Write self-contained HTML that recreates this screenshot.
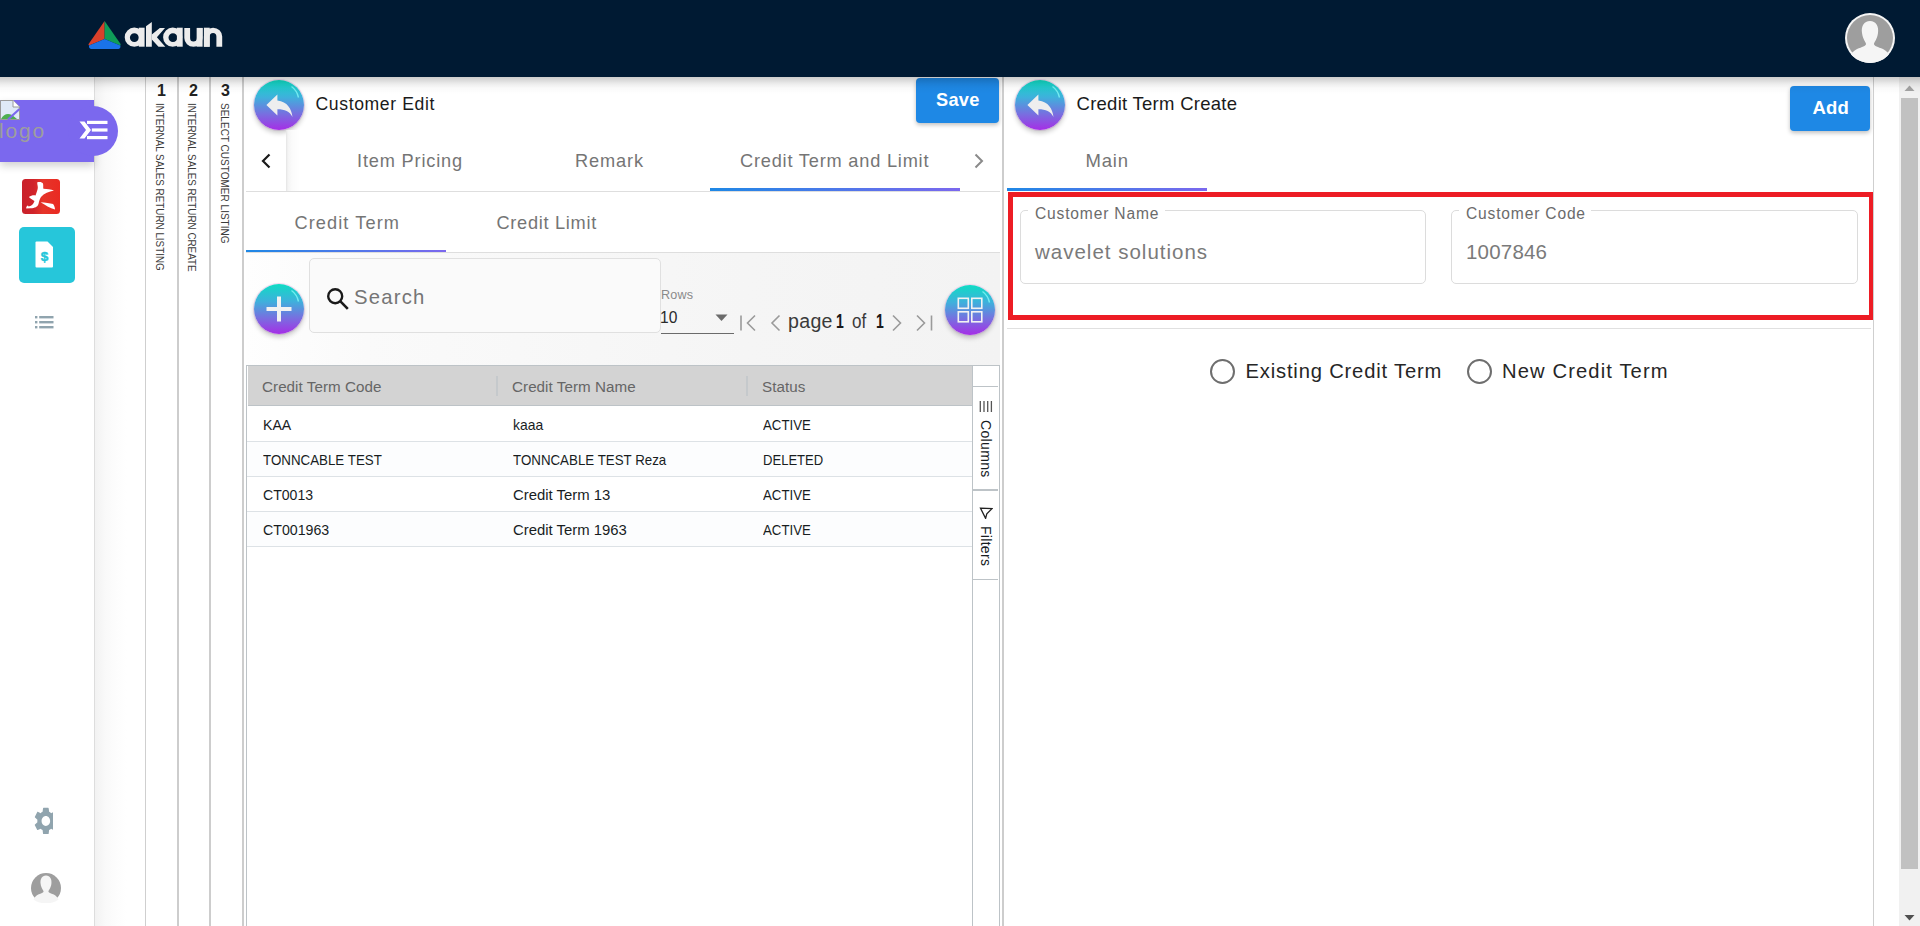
<!DOCTYPE html>
<html><head><meta charset="utf-8">
<style>
*{box-sizing:border-box;margin:0;padding:0}
html,body{width:1920px;height:926px;overflow:hidden;background:#fff;font-family:"Liberation Sans",sans-serif;color:#212121}
.a{position:absolute}
.t{position:absolute;white-space:nowrap;line-height:1}
</style></head><body>

<!-- ===== header ===== -->
<div class="a" style="left:0;top:0;width:1920px;height:77px;background:#001a33"></div>
<svg class="a" style="left:80px;top:10px" width="160" height="50" viewBox="80 10 160 50">
  <path d="M104.6 21 L104.6 39 L89 45.6 Q88 45 88.8 43.8 Z" fill="#d9412b"/>
  <path d="M104.6 21 L104.6 39 L120.3 45.6 Q121 45 120.4 43.8 Z" fill="#0f9d58"/>
  <path d="M104.6 39 L89 45.6 Q88.5 48.5 91 48.9 L118.5 48.9 Q121 48.5 120.3 45.6 Z" fill="#1a73e8"/>
  <g fill="#ececec">
   <path fill-rule="evenodd" d="M124.7 37.2 A9.6 9.6 0 1 0 143.9 37.2 A9.6 9.6 0 1 0 124.7 37.2 Z M129.9 37.6 A4.45 4.3 0 1 0 138.8 37.6 A4.45 4.3 0 1 0 129.9 37.6 Z"/>
   <rect x="138.8" y="27.7" width="5.8" height="19"/>
   <path d="M146 26.3 L151.8 21.9 V46.7 H146 Z"/>
   <path d="M151.8 34.6 L159.8 27.9 H165 L156.9 37.3 L165.3 46.7 H158.5 L151.8 39.6 Z"/>
   <path fill-rule="evenodd" d="M163.1 37.2 A9.6 9.6 0 1 0 182.3 37.2 A9.6 9.6 0 1 0 163.1 37.2 Z M168.5 37.6 A4.45 4.3 0 1 0 177.4 37.6 A4.45 4.3 0 1 0 168.5 37.6 Z"/>
   <rect x="176.9" y="27.7" width="5.8" height="19"/>
   <path d="M184.3 27.9 H190.1 V38 A3.35 3.6 0 0 0 196.8 38 V27.9 H202.6 V38 A9.15 8.7 0 0 1 184.3 38 Z"/>
   <rect x="196.8" y="27.9" width="5.8" height="18.8"/>
   <path d="M203.9 46.7 H209.7 V36.6 A3.35 3.6 0 0 1 216.4 36.6 V46.7 H222.2 V36.6 A9.15 8.9 0 0 0 203.9 36.6 Z"/>
   <rect x="203.9" y="27.7" width="5.8" height="19"/>
  </g>
</svg>
<div class="a" style="left:1845px;top:13px;width:50px;height:50px;border-radius:50%;background:#f5f5f5;overflow:hidden">
  <svg width="50" height="50" viewBox="0 0 50 50"><circle cx="25" cy="25" r="23" fill="#9e9e9e"/>
  <path d="M25 8 C31 8 34 13 33 20 C32 27 29 29 29 31 C29 33 33 34 38 36 C42 38 44 41 45 43 C40 48 33 50 25 50 C17 50 10 48 5 43 C6 41 8 38 12 36 C17 34 21 33 21 31 C21 29 18 27 17 20 C16 13 19 8 25 8 Z" fill="#f5f5f5"/></svg>
</div>

<!-- ===== sidebar ===== -->
<div class="a" id="sidebar" style="left:0;top:77px;width:95px;height:849px;background:#fff;border-right:1px solid #ddd"></div>
<!-- ===== vertical tabs column ===== -->
<div class="a" style="left:95px;top:77px;width:50px;height:849px;background:linear-gradient(90deg,#f2f2f2 0,#f9f9f9 10px,#fdfdfd 22px,#fff 32px)"></div>
<div class="a" style="left:145px;top:77px;width:1px;height:849px;background:#cfcfcf"></div>
<div class="a" style="left:177px;top:77px;width:2px;height:849px;background:#cdcdcd"></div>
<div class="a" style="left:209px;top:77px;width:2px;height:849px;background:#cdcdcd"></div>
<div class="a" style="left:242px;top:77px;width:2px;height:849px;background:#cdcdcd"></div>
<div class="t" style="left:157px;top:83px;font-size:16px;font-weight:700;color:#222">1</div>
<div class="t" style="left:189px;top:83px;font-size:16px;font-weight:700;color:#222">2</div>
<div class="t" style="left:221px;top:83px;font-size:16px;font-weight:700;color:#222">3</div>
<div class="t" style="left:165px;top:103px;font-size:11.4px;color:#3c3c3c;transform-origin:0 0;transform:rotate(90deg) scaleX(0.865)">INTERNAL SALES RETURN LISTING</div>
<div class="t" style="left:197px;top:103px;font-size:11.4px;color:#3c3c3c;transform-origin:0 0;transform:rotate(90deg) scaleX(0.865)">INTERNAL SALES RETURN CREATE</div>
<div class="t" style="left:230px;top:103px;font-size:11.4px;color:#3c3c3c;transform-origin:0 0;transform:rotate(90deg) scaleX(0.88)">SELECT CUSTOMER LISTING</div>

<!-- ===== left panel ===== -->
<div id="left">
<!-- back button -->
<div class="a" style="left:254px;top:80px;width:50px;height:50px;border-radius:50%;background:linear-gradient(180deg,#0fdcc4 0%,#3fb0dc 35%,#7b6be0 70%,#a52ee6 100%);box-shadow:0 3px 5px rgba(0,0,0,.22),0 0 0 1px rgba(230,200,240,.6)">
 <svg class="a" style="left:0;top:0" width="50" height="50" viewBox="0 0 50 50">
  <path d="M37.5 6.5 Q43 10.5 44.5 17.5" fill="none" stroke="#7ff4f4" stroke-width="1.4" opacity=".85"/>
  <path d="M23.4 14.6 L12.4 25 L23.4 35.4 V29.2 C31 29.2 35.5 31 38.5 37 C37.5 29 33.5 21.5 23.4 20.5 Z" fill="#eeeeee"/>
 </svg>
</div>
<div class="t" id="custedit" style="left:315.5px;top:95.5px;font-size:17.6px;color:#1a1a1a;letter-spacing:0.62px">Customer Edit</div>
<!-- save -->
<div class="a" style="left:916px;top:78px;width:83px;height:45px;border-radius:4px;background:#1e88e5;box-shadow:0 2px 4px rgba(0,0,0,.25)"></div>
<div class="t" style="left:936px;top:91px;font-size:18.2px;font-weight:700;color:#fff;letter-spacing:0.3px">Save</div>

<!-- tab header -->
<svg class="a" style="left:260px;top:153px" width="12" height="16" viewBox="0 0 12 16"><path d="M9.5 1.5 L3 8 L9.5 14.5" fill="none" stroke="#1a1a1a" stroke-width="2.2"/></svg>
<div class="a" style="left:286px;top:130px;width:14px;height:61px;background:linear-gradient(90deg,#e4e4e4 0,#f4f4f4 2px,#fbfbfb 6px,#fff 14px)"></div>
<div class="t" style="left:357px;top:152px;font-size:18.2px;color:#757575;letter-spacing:0.83px">Item Pricing</div>
<div class="t" style="left:575px;top:152px;font-size:18.2px;color:#757575;letter-spacing:0.88px">Remark</div>
<div class="t" style="left:740px;top:152px;font-size:18.2px;color:#757575;letter-spacing:0.8px">Credit Term and Limit</div>
<svg class="a" style="left:973px;top:153px" width="12" height="16" viewBox="0 0 12 16"><path d="M2.5 1.5 L9 8 L2.5 14.5" fill="none" stroke="#8a8a8a" stroke-width="2"/></svg>
<div class="a" style="left:246px;top:191px;width:754px;height:1px;background:#dedede"></div>
<div class="a" style="left:710px;top:188px;width:250px;height:3px;background:linear-gradient(90deg,#1e88e5,#7b68ee)"></div>

<!-- inner tabs -->
<div class="t" style="left:294.5px;top:213.5px;font-size:18.2px;color:#757575;letter-spacing:1.08px">Credit Term</div>
<div class="t" style="left:496.5px;top:213.5px;font-size:18.2px;color:#757575;letter-spacing:0.71px">Credit Limit</div>
<div class="a" style="left:246px;top:252px;width:754px;height:1px;background:#dedede"></div>
<div class="a" style="left:246px;top:250px;width:200px;height:2px;background:linear-gradient(90deg,#1e88e5,#7b68ee)"></div>

<!-- toolbar -->
<div class="a" style="left:246px;top:253px;width:754px;height:112px;background:linear-gradient(90deg,#fefefe 0,#fafafa 120px,#f5f5f5 500px,#f3f3f3 754px)"></div>
<div class="a" style="left:254px;top:284px;width:50px;height:50px;border-radius:50%;background:linear-gradient(180deg,#0fdcc4 0%,#3fb0dc 35%,#7b6be0 70%,#a52ee6 100%);box-shadow:0 3px 5px rgba(0,0,0,.22),0 0 0 1px rgba(230,200,240,.6)">
 <svg class="a" style="left:0;top:0" width="50" height="50" viewBox="0 0 50 50">
  <path d="M37.5 6.5 Q43 10.5 44.5 17.5" fill="none" stroke="#7ff4f4" stroke-width="1.4" opacity=".85"/>
  <rect x="12.5" y="23" width="25" height="4" fill="#f2f2f2"/><rect x="23" y="12.5" width="4" height="25" fill="#f2f2f2"/>
 </svg>
</div>
<div class="a" style="left:309px;top:258px;width:352px;height:75px;border:1px solid #e0e0e0;border-radius:5px;background:#fafafa"></div>
<svg class="a" style="left:326px;top:287px" width="24" height="23" viewBox="0 0 24 23"><circle cx="9.2" cy="9.2" r="7" fill="none" stroke="#1a1a1a" stroke-width="2.4"/><path d="M14.2 14.2 L21.8 21.8" stroke="#1a1a1a" stroke-width="2.6"/></svg>
<div class="t" style="left:354px;top:286.5px;font-size:20.3px;color:#757575;letter-spacing:1.2px">Search</div>
<div class="t" style="left:661px;top:289px;font-size:12.6px;color:#8a8a8a;letter-spacing:0.2px">Rows</div>
<div class="t" style="left:660px;top:310px;font-size:15.6px;color:#2a2a2a">10</div>
<svg class="a" style="left:715px;top:314px" width="13" height="8" viewBox="0 0 13 8"><path d="M0.5 0.5 H12.5 L6.5 7 Z" fill="#6b6b6b"/></svg>
<div class="a" style="left:661px;top:333px;width:73px;height:1px;background:#6b6b6b"></div>
<svg class="a" style="left:738px;top:312px" width="200" height="22" viewBox="738 312 200 22">
 <g fill="none" stroke="#9a9a9a" stroke-width="1.6">
  <path d="M741 315.5 V330.5"/><path d="M755 315.5 L747.5 323 L755 330.5"/>
  <path d="M779.5 315.5 L772 323 L779.5 330.5"/>
  <path d="M893 315.5 L900.5 323 L893 330.5"/>
  <path d="M917 315.5 L924.5 323 L917 330.5"/><path d="M931.5 315.5 V330.5"/>
 </g>
</svg>
<div class="t" style="left:788px;top:312px;font-size:19.6px;color:#3a3a3a;letter-spacing:0.3px">page</div>
<div class="t" style="left:836px;top:311.5px;font-size:19.5px;font-weight:700;color:#1a1a1a;transform-origin:0 0;transform:scaleX(0.72)">1</div>
<div class="t" style="left:852px;top:312px;font-size:19.6px;color:#3a3a3a;transform-origin:0 0;transform:scaleX(0.87)">of</div>
<div class="t" style="left:875.5px;top:311.5px;font-size:19.5px;font-weight:700;color:#1a1a1a;transform-origin:0 0;transform:scaleX(0.72)">1</div>
<div class="a" style="left:945px;top:285px;width:50px;height:50px;border-radius:50%;background:linear-gradient(180deg,#0fdcc4 0%,#3fb0dc 35%,#7b6be0 70%,#a52ee6 100%);box-shadow:0 3px 5px rgba(0,0,0,.22),0 0 0 1px rgba(230,200,240,.6)">
 <svg class="a" style="left:0;top:0" width="50" height="50" viewBox="0 0 50 50">
  <path d="M37.5 6.5 Q43 10.5 44.5 17.5" fill="none" stroke="#7ff4f4" stroke-width="1.4" opacity=".85"/>
  <g fill="none" stroke="#f2f2f2" stroke-width="1.6"><rect x="13.3" y="13.3" width="10" height="10"/><rect x="26.8" y="13.3" width="10" height="10"/><rect x="13.3" y="26.8" width="10" height="10"/><rect x="26.8" y="26.8" width="10" height="10"/></g>
 </svg>
</div>

<!-- grid -->
<div class="a" style="left:246px;top:365px;width:754px;height:561px;border:1px solid #bdc3c7;border-bottom:none;background:#fff"></div>
<div class="a" style="left:247px;top:366px;width:725px;height:40px;background:#d3d3d3;border-bottom:1px solid #bdc3c7"></div>
<div class="a" style="left:247px;top:366px;width:1px;height:40px;background:#fff"></div>
<div class="a" style="left:496px;top:376px;width:2px;height:20px;background:#c5c9cc"></div>
<div class="a" style="left:746px;top:376px;width:2px;height:20px;background:#c5c9cc"></div>
<div class="t" style="left:262px;top:379px;font-size:15.2px;color:#666;letter-spacing:0.05px">Credit Term Code</div>
<div class="t" style="left:512px;top:379px;font-size:15.2px;color:#666;letter-spacing:0.05px">Credit Term Name</div>
<div class="t" style="left:762px;top:379px;font-size:15.2px;color:#666;letter-spacing:0.05px">Status</div>

<div class="a" style="left:247px;top:441px;width:725px;height:1px;background:#dde2e6"></div>
<div class="a" style="left:247px;top:442px;width:725px;height:34px;background:#fcfdfe"></div>
<div class="a" style="left:247px;top:476px;width:725px;height:1px;background:#dde2e6"></div>
<div class="a" style="left:247px;top:511px;width:725px;height:1px;background:#dde2e6"></div>
<div class="a" style="left:247px;top:512px;width:725px;height:34px;background:#fcfdfe"></div>
<div class="a" style="left:247px;top:546px;width:725px;height:1px;background:#dde2e6"></div>

<div class="t" style="left:262.6px;top:416.5px;font-size:15px;color:#181d1f;transform-origin:0 0;transform:scaleX(0.94)">KAA</div>
<div class="t" style="left:512.6px;top:416.5px;font-size:15px;color:#181d1f;transform-origin:0 0;transform:scaleX(0.927)">kaaa</div>
<div class="t" style="left:762.6px;top:416.5px;font-size:15px;color:#181d1f;transform-origin:0 0;transform:scaleX(0.882)">ACTIVE</div>
<div class="t" style="left:262.6px;top:451.5px;font-size:15px;color:#181d1f;transform-origin:0 0;transform:scaleX(0.889)">TONNCABLE TEST</div>
<div class="t" style="left:512.6px;top:451.5px;font-size:15px;color:#181d1f;transform-origin:0 0;transform:scaleX(0.888)">TONNCABLE TEST Reza</div>
<div class="t" style="left:762.6px;top:451.5px;font-size:15px;color:#181d1f;transform-origin:0 0;transform:scaleX(0.87)">DELETED</div>
<div class="t" style="left:262.6px;top:486.5px;font-size:15px;color:#181d1f;transform-origin:0 0;transform:scaleX(0.938)">CT0013</div>
<div class="t" style="left:512.6px;top:486.5px;font-size:15px;color:#181d1f;transform-origin:0 0;transform:scaleX(0.993)">Credit Term 13</div>
<div class="t" style="left:762.6px;top:486.5px;font-size:15px;color:#181d1f;transform-origin:0 0;transform:scaleX(0.882)">ACTIVE</div>
<div class="t" style="left:262.6px;top:521.5px;font-size:15px;color:#181d1f;transform-origin:0 0;transform:scaleX(0.946)">CT001963</div>
<div class="t" style="left:512.6px;top:521.5px;font-size:15px;color:#181d1f;transform-origin:0 0;transform:scaleX(0.992)">Credit Term 1963</div>
<div class="t" style="left:762.6px;top:521.5px;font-size:15px;color:#181d1f;transform-origin:0 0;transform:scaleX(0.882)">ACTIVE</div>

<!-- side bar -->
<div class="a" style="left:972px;top:366px;width:1px;height:560px;background:#bdc3c7"></div>
<div class="a" style="left:973px;top:386px;width:25px;height:1px;background:#bdc3c7"></div>
<div class="a" style="left:973px;top:489px;width:25px;height:2px;background:#bdc3c7"></div>
<div class="a" style="left:973px;top:579px;width:25px;height:1px;background:#bdc3c7"></div>
<svg class="a" style="left:979px;top:401px" width="14" height="12" viewBox="0 0 14 12"><g stroke="#555" stroke-width="1.3"><path d="M1.3 0 V11"/><path d="M5 0 V11"/><path d="M8.7 0 V11"/><path d="M12.4 0 V11"/></g></svg>
<div class="t" style="left:993px;top:420px;font-size:14px;color:#181d1f;letter-spacing:0.35px;transform-origin:0 0;transform:rotate(90deg)">Columns</div>
<svg class="a" style="left:979px;top:507px" width="14" height="12" viewBox="0 0 14 12"><path d="M1.5 1.2 L13 1.6 L7.8 6.8 L6.6 11.4 Z" fill="none" stroke="#222" stroke-width="1.3" stroke-linejoin="miter"/></svg>
<div class="t" style="left:993px;top:526px;font-size:14px;color:#181d1f;letter-spacing:0.3px;transform-origin:0 0;transform:rotate(90deg)">Filters</div>
</div>

<!-- ===== divider ===== -->
<div class="a" style="left:1002px;top:77px;width:2px;height:849px;background:#cdcdcd"></div>

<!-- ===== right panel ===== -->
<div id="right">
<div class="a" style="left:1015px;top:80px;width:50px;height:50px;border-radius:50%;background:linear-gradient(180deg,#0fdcc4 0%,#3fb0dc 35%,#7b6be0 70%,#a52ee6 100%);box-shadow:0 3px 5px rgba(0,0,0,.22),0 0 0 1px rgba(230,200,240,.6)">
 <svg class="a" style="left:0;top:0" width="50" height="50" viewBox="0 0 50 50">
  <path d="M37.5 6.5 Q43 10.5 44.5 17.5" fill="none" stroke="#7ff4f4" stroke-width="1.4" opacity=".85"/>
  <path d="M23.4 14.6 L12.4 25 L23.4 35.4 V29.2 C31 29.2 35.5 31 38.5 37 C37.5 29 33.5 21.5 23.4 20.5 Z" fill="#eeeeee"/>
 </svg>
</div>
<div class="t" style="left:1076.5px;top:94.5px;font-size:18.5px;color:#1a1a1a;letter-spacing:0.27px">Credit Term Create</div>
<div class="a" style="left:1790px;top:86px;width:80px;height:45px;border-radius:4px;background:#1e88e5;box-shadow:0 2px 4px rgba(0,0,0,.25)"></div>
<div class="t" style="left:1812.5px;top:99px;font-size:18.5px;font-weight:700;color:#fff;letter-spacing:0.2px">Add</div>

<div class="t" style="left:1085.5px;top:152px;font-size:18.5px;color:#757575;letter-spacing:0.8px">Main</div>
<div class="a" style="left:1007px;top:188px;width:200px;height:3px;background:linear-gradient(90deg,#1e88e5,#7b68ee)"></div>

<!-- red highlight box -->
<div class="a" style="left:1008px;top:192px;width:866px;height:128px;border:5px solid #ed1c24"></div>

<!-- fields -->
<div class="a" style="left:1020px;top:210px;width:406px;height:74px;border:1px solid #dcdcdc;border-radius:5px"></div>
<div class="a" style="left:1028px;top:205px;width:137px;height:10px;background:#fff"></div>
<div class="t" style="left:1035px;top:205.5px;font-size:15.6px;color:#6b6b6b;letter-spacing:0.82px">Customer Name</div>
<div class="t" style="left:1035px;top:241.5px;font-size:20.5px;color:#7a7a7a;letter-spacing:1.0px">wavelet solutions</div>

<div class="a" style="left:1451px;top:210px;width:407px;height:74px;border:1px solid #dcdcdc;border-radius:5px"></div>
<div class="a" style="left:1459px;top:205px;width:132px;height:10px;background:#fff"></div>
<div class="t" style="left:1466px;top:205.5px;font-size:15.6px;color:#6b6b6b;letter-spacing:0.82px">Customer Code</div>
<div class="t" style="left:1466px;top:241.5px;font-size:20.5px;color:#7a7a7a;letter-spacing:0.2px">1007846</div>

<div class="a" style="left:1007px;top:328px;width:864px;height:1px;background:#e0e0e0"></div>

<!-- radios -->
<div class="a" style="left:1210px;top:359px;width:25px;height:25px;border-radius:50%;border:2px solid #6e6e6e"></div>
<div class="t" style="left:1245.5px;top:360.5px;font-size:20.2px;color:#262626;letter-spacing:0.82px">Existing Credit Term</div>
<div class="a" style="left:1467px;top:359px;width:25px;height:25px;border-radius:50%;border:2px solid #6e6e6e"></div>
<div class="t" style="left:1502px;top:360.5px;font-size:20.2px;color:#262626;letter-spacing:1.12px">New Credit Term</div>
</div>

<!-- right border + scrollbar -->
<div class="a" style="left:1873px;top:77px;width:1px;height:849px;background:#cfcfcf"></div>
<div class="a" style="left:1899px;top:77px;width:21px;height:849px;background:#f1f1f1"></div>
<div class="a" style="left:1901px;top:98px;width:17px;height:771px;background:#c1c1c1"></div>
<svg class="a" style="left:1904px;top:84px" width="11" height="8" viewBox="0 0 11 8"><path d="M0.5 7 L5.5 1.5 L10.5 7 Z" fill="#a3a3a3"/></svg>
<svg class="a" style="left:1904px;top:914px" width="11" height="8" viewBox="0 0 11 8"><path d="M0.5 1 L5.5 6.5 L10.5 1 Z" fill="#505050"/></svg>

<!-- header shadow -->
<div class="a" style="left:0;top:77px;width:1920px;height:17px;background:linear-gradient(180deg,rgba(0,0,0,.2) 0,rgba(0,0,0,.15) 3px,rgba(0,0,0,.07) 7px,rgba(0,0,0,.025) 11px,rgba(0,0,0,0) 17px)"></div>
<!-- purple pill -->
<div class="a" style="left:0;top:100px;width:94px;height:62px;background:#7b68ee;box-shadow:0 4px 8px rgba(0,0,0,.18)"></div>
<div class="a" style="left:68px;top:106px;width:50px;height:50px;border-radius:50%;background:#7b68ee"></div>
<!-- broken image icon -->
<svg class="a" style="left:0;top:100px" width="21" height="21" viewBox="0 0 21 21">
 <path d="M0.5 0.5 H13 L19.5 7 V19.5 H0.5 Z" fill="#dfe9f7" stroke="#9a9a9a" stroke-width="1"/>
 <path d="M13 0.5 V7 H19.5" fill="#fff" stroke="#9a9a9a" stroke-width="1"/>
 <path d="M1 19 Q5 12 12 15 L17 19 Z" fill="#4caf50"/>
 <path d="M8 19.5 L19.5 9" stroke="#7b68ee" stroke-width="2.2"/>
</svg>
<div class="t" style="left:-1px;top:120px;font-size:21px;color:#9e9e9e;letter-spacing:1.8px">logo</div>
<!-- menu-open icon -->
<svg class="a" style="left:78px;top:119px" width="32" height="22" viewBox="0 0 32 22">
 <path d="M1.5 2.5 L6.5 2.5 L13 11 L6.5 19.5 L1.5 19.5 L8 11 Z" fill="#fff"/>
 <rect x="9" y="1.8" width="20.5" height="3.2" fill="#fff"/>
 <rect x="13.8" y="9.4" width="15.7" height="3.2" fill="#fff"/>
 <rect x="9" y="17" width="20.5" height="3.2" fill="#fff"/>
</svg>
<!-- red app icon -->
<div class="a" style="left:22px;top:179px;width:38px;height:35px;border-radius:3.5px;background:linear-gradient(90deg,#c9212b 0,#d0232a 30%,#e5352a 55%,#ea2a22 100%);overflow:hidden">
 <svg width="38" height="35" viewBox="0 0 38 35">
  <path d="M15.3 3.2 C17.5 2.5 20.5 3 21 4.5 C21.5 6.5 21 8.5 21.4 9.8 C25 10 29 10.5 32 11.6 C27 12.5 22 14.5 19 18 C17.5 20 17 23 16.5 25 C15.5 28 13 29 8.5 29.3 L4.2 29.5 C4 28 5 26.5 6 26.5 L6.5 27.5 C9 27 11.5 25.5 12.5 22 C11 21 8.5 20 6.9 18.1 C9 16.5 11.5 16 13.5 16.5 C14.5 14 15.5 11 15.8 9 C16 7 15 5 15.3 3.2 Z" fill="#fff"/>
  <path d="M18.6 23.2 C23 23.5 28 24 31.1 25 C32.5 27 33 29 33 30.6 C28 29 23 26 18.6 23.2 Z" fill="#fff"/>
 </svg>
</div>
<!-- teal square -->
<div class="a" style="left:19px;top:227px;width:56px;height:56px;border-radius:5px;background:#26c6da"></div>
<svg class="a" style="left:35px;top:241px" width="19" height="27" viewBox="0 0 19 27">
 <path d="M1.5 0.5 H12.5 L18 6 V25.5 Q18 26.5 17 26.5 H1.5 Q0.5 26.5 0.5 25.5 V1.5 Q0.5 0.5 1.5 0.5 Z" fill="#fff"/>
 <text x="9.5" y="20" font-family="Liberation Sans" font-weight="700" font-size="13.5" fill="#26c6da" text-anchor="middle" stroke="#26c6da" stroke-width="0.5">$</text>
</svg>
<!-- list icon -->
<svg class="a" style="left:35px;top:316px" width="19" height="13" viewBox="0 0 19 13">
 <g fill="#90a4ae"><rect x="0" y="0" width="2.4" height="2.4"/><rect x="0" y="5" width="2.4" height="2.4"/><rect x="0" y="10" width="2.4" height="2.4"/>
 <rect x="4.2" y="0" width="14.3" height="2.4"/><rect x="4.2" y="5" width="14.3" height="2.4"/><rect x="4.2" y="10" width="14.3" height="2.4"/></g>
</svg>
<!-- gear -->
<div class="a" style="left:30px;top:800px;width:23px;height:40px;overflow:hidden"><svg class="a" style="left:3.5px;top:7px" width="23" height="29" viewBox="2 1.8 19.4 21.2" preserveAspectRatio="none">
 <path fill="#90a4ae" d="M19.14 12.94c.04-.3.06-.61.06-.94 0-.32-.02-.64-.07-.94l2.03-1.58c.18-.14.23-.41.12-.61l-1.92-3.32c-.12-.22-.37-.29-.59-.22l-2.39.96c-.5-.38-1.03-.7-1.62-.94l-.36-2.54c-.04-.24-.24-.41-.48-.41h-3.84c-.24 0-.43.17-.47.41l-.36 2.54c-.59.24-1.13.57-1.62.94l-2.39-.96c-.22-.08-.47 0-.59.22L2.74 8.87c-.12.21-.08.47.12.61l2.03 1.58c-.05.3-.09.63-.09.94s.02.64.07.94l-2.03 1.58c-.18.14-.23.41-.12.61l1.92 3.32c.12.22.37.29.59.22l2.39-.96c.5.38 1.03.7 1.62.94l.36 2.54c.05.24.24.41.48.41h3.84c.24 0 .44-.17.47-.41l.36-2.54c.59-.24 1.13-.56 1.62-.94l2.39.96c.22.08.47 0 .59-.22l1.92-3.32c.12-.22.07-.47-.12-.61l-2.01-1.58zM12 15.6c-1.98 0-3.6-1.62-3.6-3.6s1.62-3.6 3.6-3.6 3.6 1.62 3.6 3.6-1.62 3.6-3.6 3.6z"/>
</svg></div>
<!-- avatar bottom -->
<svg class="a" style="left:31px;top:873px" width="30" height="30" viewBox="0 0 50 50">
 <circle cx="25" cy="25" r="25" fill="#9e9e9e"/>
 <path d="M25 4 C32 4 35 10 34 18 C33 26 29 29 29 31 C29 33 33 34 38 36 C42 38 44 41 46 44 C40 49 33 50 25 50 C17 50 10 49 4 44 C6 41 8 38 12 36 C17 34 21 33 21 31 C21 29 17 26 16 18 C15 10 18 4 25 4 Z" fill="#f5f5f5"/>
</svg>

</body></html>
